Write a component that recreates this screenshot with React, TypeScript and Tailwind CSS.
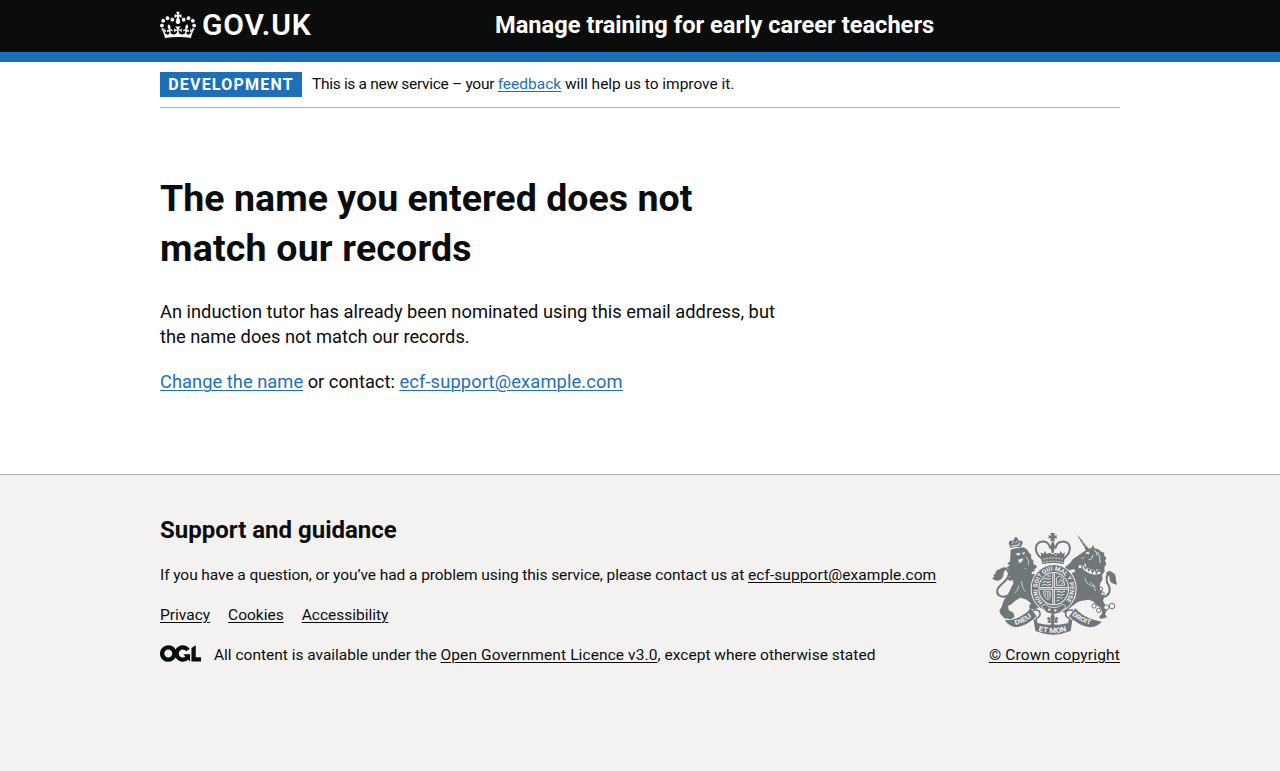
import type { ReactNode } from 'react';

function Crown() {
  return (
    <svg viewBox="0 0 132 97" width="36" height="30" fill="currentColor" aria-hidden="true" className="block">
      <path d="M25 30.2c3.5 1.5 7.7-.2 9.1-3.7 1.5-3.6-.2-7.8-3.9-9.2-3.6-1.4-7.6.3-9.1 3.9-1.4 3.5.3 7.5 3.9 9zM9 39.5c3.6 1.5 7.8-.2 9.2-3.7 1.5-3.6-.2-7.8-3.9-9.1-3.6-1.5-7.6.2-9.1 3.8-1.4 3.5.3 7.5 3.8 9zM4.4 57.2c3.5 1.5 7.7-.2 9.1-3.8 1.5-3.6-.2-7.7-3.9-9.1-3.5-1.5-7.6.3-9.1 3.8-1.4 3.5.3 7.6 3.9 9.1zm38.3-21.4c3.5 1.5 7.7-.2 9.1-3.8 1.5-3.6-.2-7.7-3.9-9.1-3.6-1.5-7.6.3-9.1 3.8-1.3 3.6.4 7.7 3.9 9.1zm64.4-5.6c-3.6 1.5-7.8-.2-9.1-3.7-1.5-3.6.2-7.8 3.8-9.2 3.6-1.4 7.7.3 9.2 3.9 1.3 3.5-.4 7.5-3.9 9zm15.9 9.3c-3.6 1.5-7.7-.2-9.1-3.7-1.5-3.6.2-7.8 3.7-9.1 3.6-1.5 7.7.2 9.2 3.8 1.5 3.5-.3 7.5-3.8 9zm4.7 17.7c-3.6 1.5-7.8-.2-9.2-3.8-1.5-3.6.2-7.7 3.9-9.1 3.6-1.5 7.7.3 9.2 3.8 1.3 3.5-.4 7.6-3.9 9.1zM89.3 35.8c-3.6 1.5-7.8-.2-9.2-3.8-1.4-3.6.2-7.7 3.9-9.1 3.6-1.5 7.7.3 9.2 3.8 1.4 3.6-.3 7.7-3.9 9.1zM69.7 17.7l8.9 4.7V9.3l-8.9 2.8c-.2-.3-.5-.6-.9-.9L72.4 0H59.6l3.5 11.2c-.3.3-.6.5-.9.9l-8.8-2.8v13.1l8.8-4.7c.3.3.6.7.9.9l-5 15.4v.1c-.2.8-.4 1.6-.4 2.4 0 4.1 3.1 7.5 7 8.1h.2c.3 0 .7.1 1 .1.4 0 .7 0 1-.1h.2c4-.6 7.1-4.1 7.1-8.1 0-.8-.1-1.7-.4-2.4V34l-5.1-15.4c.4-.2.7-.6 1-.9zM66 92.8c16.9 0 32.8 1.1 47.1 3.2 4-16.9 8.9-26.7 14-33.5l-9.6-3.4c1 4.9 1.1 7.2 0 10.2-1.5-1.4-3-4.3-4.2-8.7L108.6 76c2.8-2 5-3.2 7.5-3.3-4.4 9.4-10 11.9-13.6 11.2-4.3-.8-6.3-4.6-5.6-7.9 1-4.7 5.7-5.9 8-.5 4.3-8.7-3-11.4-7.6-8.8 7.1-7.2 7.9-13.5 2.1-21.1-8 6.1-8.1 12.3-4.5 20.8-4.7-5.4-12.1-2.5-9.5 6.2 3.4-5.2 7.9-2 7.2 3.1-.6 4.3-6.4 7.8-13.5 7.2-10.3-.9-10.9-8-11.2-13.8 2.5-.5 7.1 1.8 11 7.3L80.2 60c-4.1 4.4-8 5.3-12.3 5.4 1.4-4.4 8-11.6 8-11.6H55.5s6.4 7.2 7.9 11.6c-4.2-.1-8-1-12.3-5.4l1.4 16.4c3.9-5.5 8.5-7.7 10.9-7.3-.3 5.8-.9 12.8-11.1 13.8-7.2.6-12.9-2.9-13.5-7.2-.7-5 3.8-8.3 7.1-3.1 2.7-8.7-4.6-11.6-9.4-6.2 3.7-8.5 3.6-14.7-4.6-20.8-5.8 7.6-5 13.9 2.2 21.1-4.7-2.6-11.9.1-7.7 8.8 2.3-5.5 7.1-4.2 8.1.5.7 3.3-1.3 7.1-5.7 7.9-3.5.7-9-1.8-13.5-11.2 2.5.1 4.7 1.3 7.5 3.3l-4.7-15.4c-1.2 4.4-2.7 7.2-4.3 8.7-1.1-3-.9-5.3 0-10.2l-9.5 3.4c5 6.9 9.9 16.7 14 33.5 14.8-2.1 30.8-3.2 47.7-3.2z" />
    </svg>
  );
}

function OglLogo() {
  return (
    <svg viewBox="0 0 483.2 195.7" width="41" height="17" fill="currentColor" aria-hidden="true" className="block">
      <path d="M421.5 142.8V.1l-50.7 32.3v161.1h112.4v-50.7zm-122.3-9.6A47.12 47.12 0 0 1 221 97.8c0-26 21.1-47.1 47.1-47.1 16.7 0 31.4 8.7 39.7 21.8l42.7-27.2A97.63 97.63 0 0 0 268.1 0c-36.5 0-68.3 20.1-85.1 49.7A98 98 0 0 0 97.8 0C43.9 0 0 43.9 0 97.8s43.9 97.8 97.8 97.8c36.5 0 68.3-20.1 85.1-49.7a97.76 97.76 0 0 0 149.6 25.4l19.4 22.2h3v-87.8h-80l24.3 27.5zM97.8 145c-26 0-47.1-21.1-47.1-47.1s21.1-47.1 47.1-47.1 47.1 21.1 47.1 47.1S123.8 145 97.8 145" />
    </svg>
  );
}

function RoyalArms() {
  const ink = '#6f777b';
  const paper = '#f3f2f1';
  return (
    <svg viewBox="36 24 375 306" width="125" height="102" fill={ink} aria-hidden="true" className="block overflow-visible font-['Roboto',sans-serif] font-bold">
      <defs>
        <path id="garter" d="M189.5 232.4A49 54 0 1 1 252.5 232.4" />
        <path id="scroll-left" d="M106 300Q136 294 162 270" />
        <path id="scroll-mid" d="M175 318Q218 330 262 318" />
        <path id="scroll-right" d="M275 270Q302 294 338 300" />
      </defs>

      {/* lion */}
      <path d="M90 64q-8-12 0-16 6-4 10 2 0-10 8-10 8 0 8 10 4-6 10-2 6 6-2 14l-2 6q-16-6-30 2z" />
      <circle cx="108" cy="40" r="4" />
      <path d="M95 56l6-5M106 53l5-4M116 54l4 3M94 64l26-5" stroke={paper} strokeWidth="3" fill="none" />
      <path d="M92 74l14-4 14-1 10-2 10 5 6 10 8 8-1 10 8 8-2 7 8 8-6 7 3 8-8 2-1 8 8-2 8 10-4 12-10 4-4 12 5 18 10 16 14 14-2 14-14 7-18-2 0-11 6-4-14-12-18-6-14 8-14 12-10 5 2 12 14 8 4 12-11 8-20-3-12-14-3-10 7-10 4-14 8-16 11-16 6-14 6-10-2-12-8 4-8-6 9-8-9-2 5-8-8-4 8-6-7-8 9-3-7-9 8-4z" />
      <path d="M108 86l9-3 5 5-9 4zM125 84l10-3-3 8zM114 104l16-4-4 10-8 4z" fill={paper} />
      <path d="M138 94q10 12 8 26M134 130q8 6 14 4M124 168q2 22 12 32M104 204q12-8 12-22" stroke={paper} strokeWidth="2" fill="none" />
      <path d="M138 138l18-4 12-12M136 162l16 8 14 8" stroke={ink} strokeWidth="10" fill="none" />
      <path d="M82 212C62 222 47 208 53 192C60 174 88 168 87 144C86 136 80 130 72 132" stroke={ink} strokeWidth="6" fill="none" />
      <path d="M82 130q-12-7-22 2q-14 3-14 14l-6 3 3 6-7 5 7 5q12 6 22-4q8-10 6-18q3-8 11-13z" />

      {/* unicorn */}
      <path d="M291 29l13 14 10 13 13 16-8 6-11-20-10-16z" />
      <path d="M297 44l6-4M304 55l7-4M311 66l7-5" stroke={paper} strokeWidth="1.5" />
      <path d="M322 73l12-4 5-9 4 10 12 3 10 8 8 2-1 8 7 8-4 8 4 10-6 10 1 12-8 12 2 12-7 12-2 16 9 10 5 14-4 12 8 16 4 12-6 12 6 10-18 5-6-6 10-12-4-14-14-10-8-10-14-6-22 3-12 4-16 12-12 10-10 10-8-2 2-10 12-12 14-14 12-6-6-12-3-14-10-10-8-6 2-10 14-20 14-6-8-8-12 2-10 6-8-6 4-10 14-10 8-12z" />
      <path d="M317 84l9-3 1 6zM304 101l9-3" fill={paper} stroke={paper} strokeWidth="2" />
      <path d="M326 104q12 0 12-14M352 80q10 12 8 34M342 74q8 8 10 18" fill="none" stroke={paper} strokeWidth="2.5" />
      <path d="M309 120l10 12 12 7 14 3 16-3" stroke={paper} strokeWidth="14" fill="none" />
      <path d="M310 117l6 14 6-9 4 15 8-10 3 15 8-11 4 13 8-11 3 9" stroke={ink} strokeWidth="4" fill="none" />
      <circle cx="300" cy="125" r="6.5" fill={paper} stroke={ink} strokeWidth="3.5" />
      <path d="M306 184l-24-16-8-18 14-8 14 10M302 160l-14-4" stroke={ink} strokeWidth="8" fill="none" />
      <path d="M314 158q6 26 32 26M330 172q14 6 16 26" stroke={paper} strokeWidth="2" fill="none" />
      <path d="M370 216C394 210 392 188 382 174C376 154 384 138 396 145" stroke={ink} strokeWidth="6" fill="none" />
      <path d="M378 144q10-11 20-1q10 4 9 17l4 20-10-4-4-1q-10-6-8-18q-4-8-11-13z" />
      <g fill={paper} stroke={ink} strokeWidth="3">
        <circle cx="363" cy="192" r="5" />
        <circle cx="368" cy="206" r="5" />
        <circle cx="342" cy="243" r="6.5" />
        <circle cx="356" cy="256" r="6.5" />
        <circle cx="379" cy="247" r="7.5" />
        <circle cx="396" cy="243" r="8.5" />
      </g>

      {/* garter and shield */}
      <ellipse cx="221" cy="191" rx="69" ry="74" fill={paper} />
      <ellipse cx="221" cy="191" rx="66" ry="71" />
      <ellipse cx="221" cy="191" rx="46" ry="50" fill={paper} />
      <ellipse cx="221" cy="191" rx="43" ry="47" />
      <path d="M179 190h84M221 145v92" stroke={paper} strokeWidth="8" />
      <path d="M179 190h84M221 145v92" stroke={ink} strokeWidth="2.5" />
      <g fill="none" stroke={paper} strokeWidth="3">
        <path d="M190 163l8-4 6 4 8-3M188 172l8-3 8 4 9-4M186 181l8-3 8 3 11-3M202 153h10" />
        <path d="M230 181l-1-22 9-6 12 8 4 20zM236 175l6-12 8 10-6 4" strokeWidth="2.5" />
        <path d="M190 198q0 22 16 27q8-10 5-25zM196 200v14M202 200v20M207 200v18" strokeWidth="2" />
        <path d="M230 201l8-3 6 4 11-3M230 210l8-3 6 4 9-3M230 219l8-3 6 4 4-2M230 228l8-3" />
      </g>
      <text fill={paper} fontSize="18">
        <textPath href="#garter" textLength="246" lengthAdjust="spacingAndGlyphs">HONI SOIT QUI MAL Y PENSE</textPath>
      </text>
      <path d="M184 244l12-7 10 8 16 3 14-3 12-8 10 8-18 18-20 6-20-6z" stroke={paper} strokeWidth="2.5" />
      <circle cx="208" cy="254" r="3.5" fill={paper} />
      <circle cx="226" cy="256" r="3.5" fill={paper} />

      {/* royal crown */}
      <path d="M211 24h14l-3 9 8-3v12l-8-3 3 10h-14l3-10-8 3V30l8 3z" />
      <path d="M216 50h5l4 14-4 20h-6l-4-20z" />
      <g fill="none" stroke={ink} strokeWidth="6" strokeDasharray="6 1.6" strokeLinecap="round">
        <path d="M184 99C160 82 164 52 186 50Q205 48 210 68" />
        <path d="M253 99C276 82 274 52 252 50Q232 48 227 68" />
      </g>
      <path d="M182 98q36-12 73 0l-5 20q-32-8-62 0z" />
      <path d="M184 98l-2-16 8 5 5-9 5 9 8-4 2 12M210 95l-2-12 10 5 10-5-2 12M228 95l2-12 8 4 4-9 6 9 7-5-3 16" />
      <path d="M190 103q29-8 58 0M190 112q29-7 58 0" stroke={paper} strokeWidth="2.5" fill="none" strokeDasharray="6 3" />

      {/* motto scroll */}
      <path d="M158 256q20-4 22 8q2 10-10 16q-6 6 2 12M279 256q-20-4-22 8q-2 10 10 16q6 6-2 12" fill="none" stroke={ink} strokeWidth="5" />
      <path d="M74 286l22-2Q130 276 152 250L170 274Q142 302 110 307Q88 306 74 286z" />
      <path d="M365 290l-24-6Q308 276 286 250L267 274Q296 302 328 307Q352 306 365 290z" />
      <path d="M160 280l12 14q46 12 93 0l13-14-6 38q-53 22-106 0z" />
      <g fill={paper} fontSize="20">
        <text><textPath href="#scroll-left" textLength="56" lengthAdjust="spacingAndGlyphs">DIEU</textPath></text>
        <text fontSize="22"><textPath href="#scroll-mid" textLength="86" lengthAdjust="spacingAndGlyphs">ET MON</textPath></text>
        <text><textPath href="#scroll-right" textLength="64" lengthAdjust="spacingAndGlyphs">DROIT</textPath></text>
      </g>
      <path d="M218 264q12 13 3 24h12v5h-12l4 8h-14l4-8h-12v-5h12q-9-11 3-24zM202 278q8-6 10 10h-6q0-5-5-4zM234 278q-8-6-10 10h6q0-5 5-4z" />
    </svg>
  );
}

function Link({ className, children }: { className?: string; children: ReactNode }) {
  return (
    <a href="#" className={`underline decoration-1 underline-offset-2 ${className ?? ''}`}>
      {children}
    </a>
  );
}

export default function App() {
  return (
    <div className="flex h-[771px] flex-col bg-white font-['Roboto',sans-serif] text-[#0b0c0c]">
      <header className="h-[62px] border-b-10 border-[#1d70b8] bg-[#0b0c0c] text-white">
        <div className="mx-auto flex w-[960px] pt-[10px]">
          <a href="#" className="flex w-[335px] gap-[6px]">
            <Crown />
            <span className="text-[30px] leading-[30px] font-semibold tracking-[0.9px]">GOV.UK</span>
          </a>
          <a href="#" className="text-[23.65px] leading-[30px] font-bold whitespace-nowrap">
            Manage training for early career teachers
          </a>
        </div>
      </header>

      <div className="mx-auto flex h-[46px] w-[960px] items-start border-b border-[#b1b4b6] pt-[10px]">
        <strong className="flex h-[25px] w-[142px] items-center justify-center bg-[#1d70b8] text-base leading-5 font-bold tracking-[1.2px] text-white">
          DEVELOPMENT
        </strong>
        <span className="ml-[10px] text-[15.5px] leading-6 whitespace-nowrap">
          <span className="tracking-[-0.3px]">This is a new service – your </span>
          <Link className="text-[#1d70b8]">feedback</Link>
          <span className="tracking-[-0.03px]"> will help us to improve it.</span>
        </span>
      </div>

      <main className="mx-auto h-[366px] w-[960px] pt-[65px]">
        <div className="w-[630px]">
          <h1 className="mb-[26px] text-[37.5px] leading-[50px] font-bold">
            <span className="tracking-[0.04px]">The name you entered does not</span>
            <br />
            <span className="tracking-[0.2px]">match our records</span>
          </h1>
          <p className="mb-5 text-[18.3px] leading-[25px]">
            An induction tutor has already been nominated using this email address, but<br />
            the name does not match our records.
          </p>
          <p className="text-[18.3px] leading-[25px]">
            <Link className="tracking-[0.04px] text-[#1d70b8]">Change the name</Link> or contact:{' '}
            <Link className="tracking-[0.14px] text-[#1d70b8]">ecf-support@example.com</Link>
          </p>
        </div>
      </main>

      <footer className="flex-1 border-t border-[#b1b4b6] bg-[#f3f2f1] pt-10 text-[15.5px] leading-5">
        <div className="mx-auto flex w-[960px] items-end justify-between">
          <div className="whitespace-nowrap">
            <h2 className="mb-5 text-2xl leading-[30px] font-bold">Support and guidance</h2>
            <p className="mb-5">
              <span className="tracking-[-0.075px]">
                If you have a question, or you’ve had a problem using this service, please contact us at{' '}
              </span>
              <Link className="tracking-[0.07px]">ecf-support@example.com</Link>
            </p>
            <ul className="mb-5 flex gap-[18px]">
              <li><Link>Privacy</Link></li>
              <li><Link>Cookies</Link></li>
              <li><Link>Accessibility</Link></li>
            </ul>
            <div className="flex gap-[13px]">
              <OglLogo />
              <span>
                <span className="tracking-[-0.01px]">All content is available under the </span>
                <Link className="tracking-[0.1px]">Open Government Licence v3.0</Link>
                <span className="tracking-[0.02px]">, except where otherwise stated</span>
              </span>
            </div>
          </div>
          <div className="flex flex-col items-end gap-[10px] whitespace-nowrap">
            <div className="pr-[3px]"><RoyalArms /></div>
            <Link className="tracking-[0.16px]">© Crown copyright</Link>
          </div>
        </div>
      </footer>
    </div>
  );
}
